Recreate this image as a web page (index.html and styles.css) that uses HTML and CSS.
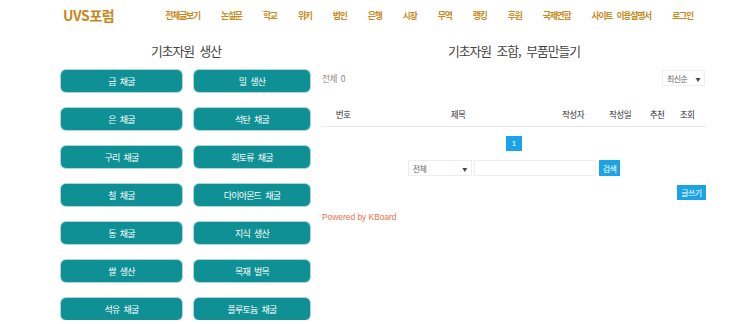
FILE: index.html
```html
<!DOCTYPE html>
<html lang="ko">
<head>
<meta charset="utf-8">
<title>UVS포럼</title>
<link rel="stylesheet" href="styles.css">
</head>
<body>
<header class="site-header">
  <div class="logo">UVS포럼</div>
  <nav class="nav">
    <a>전체글보기</a><a>논설문</a><a>학교</a><a>위키</a><a>법인</a><a>은행</a><a>시장</a><a>무역</a><a>랭킹</a><a>후원</a><a>국제연합</a><a>사이트 이용설명서</a><a>로그인</a>
  </nav>
</header>
<main class="main">
  <section class="col-left">
    <h2 class="title">기초자원 생산</h2>
    <div class="btn-grid">
      <a class="res-btn">금 채굴</a><a class="res-btn">밀 생산</a>
      <a class="res-btn">은 채굴</a><a class="res-btn">석탄 채굴</a>
      <a class="res-btn">구리 채굴</a><a class="res-btn">희토류 채굴</a>
      <a class="res-btn">철 채굴</a><a class="res-btn">다이아몬드 채굴</a>
      <a class="res-btn">동 채굴</a><a class="res-btn">지식 생산</a>
      <a class="res-btn">쌀 생산</a><a class="res-btn">목재 벌목</a>
      <a class="res-btn">석유 채굴</a><a class="res-btn">플루토늄 채굴</a>
    </div>
  </section>
  <section class="col-right">
    <h2 class="title">기초자원 조합, 부품만들기</h2>
    <div class="board-top">
      <span class="total">전체 0</span>
      <div class="fake-select sort"><span>최신순</span><span class="arrow">▼</span></div>
    </div>
    <div class="thead">
      <span>번호</span><span>제목</span><span>작성자</span><span>작성일</span><span>추천</span><span>조회</span>
    </div>
    <div class="pager"><span class="page">1</span></div>
    <div class="search">
      <div class="fake-select field"><span>전체</span><span class="arrow">▼</span></div>
      <div class="search-input"></div>
      <span class="blue-btn">검색</span>
    </div>
    <div class="write-row"><span class="blue-btn">글쓰기</span></div>
    <div class="powered">Powered by KBoard</div>
  </section>
</main>
</body>
</html>
```

FILE: styles.css
```css
* { box-sizing: border-box; }
body {
  margin: 0;
  background: #fff;
  font-family: "Noto Sans CJK KR", "Noto Sans", sans-serif;
  color: #333;
  word-spacing: 2px;
}
a { cursor: pointer; }

.site-header {
  height: 30px;
  display: flex;
  align-items: center;
  padding-left: 63px;
}
.logo {
  color: #c9861b;
  font-weight: 700;
  font-size: 14px;
  letter-spacing: -0.4px;
  line-height: 1;
}
.nav {
  display: flex;
  gap: 21.2px;
  margin-left: 51px;
}
.nav a {
  color: #c98a1e;
  font-weight: 700;
  font-size: 8.8px;
  letter-spacing: -1.2px;
  word-spacing: 3px;
  white-space: nowrap;
}

.main {
  display: flex;
  padding-top: 12px;
  padding-left: 61px;
  gap: 11px;
}
.title {
  margin: 0 0 10px;
  font-size: 12.8px;
  line-height: 18px;
  font-weight: 400;
  letter-spacing: -1px;
  word-spacing: 3px;
  color: #444;
  text-align: center;
}
.col-left { width: 250px; }
.btn-grid {
  display: grid;
  grid-template-columns: 121px 116px;
  column-gap: 12px;
  row-gap: 16px;
}
.res-btn {
  height: 22px;
  border-radius: 5px;
  background: #0f9095;
  color: #fff;
  font-size: 9px;
  letter-spacing: -0.8px;
  word-spacing: 2.5px;
  display: flex;
  align-items: center;
  justify-content: center;
  box-shadow: 0 0 0 1px rgba(15,144,149,0.35);
}

.col-right { width: 384px; }
.board-top {
  display: flex;
  justify-content: space-between;
  align-items: center;
  height: 16px;
}
.total {
  font-size: 8.6px;
  color: #888;
  letter-spacing: -0.5px;
}
.fake-select {
  display: flex;
  align-items: center;
  justify-content: space-between;
  border: 1px solid #eee;
  background: #fff;
  color: #666;
  font-size: 8px;
  letter-spacing: -0.6px;
  padding: 0 4px;
}
.arrow { font-size: 5px; color: #444; }
.sort { width: 43px; height: 16px; margin-right: 1px; }

.thead {
  margin-top: 16px;
  height: 25px;
  display: grid;
  grid-template-columns: 42px 188px 42px 52px 22px 38px;
  align-items: center;
  border-bottom: 1px solid #e8e8e8;
  font-size: 8.6px;
  letter-spacing: -0.6px;
  color: #333;
  text-align: center;
}

.pager {
  display: flex;
  justify-content: center;
  margin-top: 9px;
}
.page {
  width: 16px;
  height: 15px;
  background: #1ba3e6;
  color: #fff;
  font-size: 8px;
  display: flex;
  align-items: center;
  justify-content: center;
  font-family: "Liberation Sans", sans-serif;
}

.search {
  display: flex;
  justify-content: center;
  align-items: center;
  margin-top: 9px;
  height: 16px;
}
.field { width: 64px; height: 16px; }
.search-input {
  width: 122px;
  height: 16px;
  border: 1px solid #eee;
  margin-left: 2px;
  margin-right: 3px;
}
.blue-btn {
  background: #1ba3e6;
  color: #fff;
  font-size: 8px;
  letter-spacing: -0.6px;
  height: 16px;
  padding: 0 4px;
  display: flex;
  align-items: center;
}
.write-row {
  display: flex;
  justify-content: flex-end;
  margin-top: 9px;
}
.write-row .blue-btn { height: 15px; padding: 0 4.5px; }

.powered {
  margin-top: 12px;
  font-family: "Liberation Sans", sans-serif;
  font-size: 8.4px;
  word-spacing: 0;
  color: #e8704f;
}
```
